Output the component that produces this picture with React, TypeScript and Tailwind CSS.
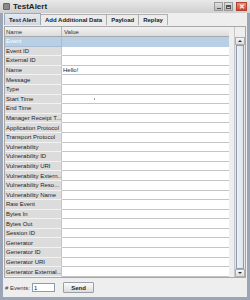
import React from 'react';

const rows = [
  'Event',
  'Event ID',
  'External ID',
  'Name',
  'Message',
  'Type',
  'Start Time',
  'End Time',
  'Manager Receipt T...',
  'Application Protocol',
  'Transport Protocol',
  'Vulnerability',
  'Vulnerability ID',
  'Vulnerability URI',
  'Vulnerability Extern...',
  'Vulnerability Reso...',
  'Vulnerability Name',
  'Raw Event',
  'Bytes In',
  'Bytes Out',
  'Session ID',
  'Generator',
  'Generator ID',
  'Generator URI',
  'Generator External...',
];

const values: Record<string, string> = { Name: 'Hello!' };

const tabs = ['Test Alert', 'Add Additional Data', 'Payload', 'Replay'];

export default function App() {
  return (
    <div
      className="w-[250px] h-[300px] flex flex-col bg-[#9aa6b8] overflow-hidden text-[#222]"
      style={{ fontFamily: '"Liberation Sans", Arial, sans-serif' }}
    >
      {/* Title bar */}
      <div className="h-[13px] flex items-center bg-gradient-to-b from-[#e9e9e9] to-[#cfcfcf] px-[3px]">
        <div className="w-[7px] h-[7px] bg-[#8a8a8a] border border-[#666] rounded-[1px] mr-[3px]" />
        <span className="text-[8px] font-bold leading-none">TestAlert</span>
        <div className="ml-auto flex items-center gap-[1px]">
          <div className="w-[9px] h-[9px] bg-gradient-to-b from-[#e0e0e0] to-[#b8b8b8] border border-[#9a9a9a] flex items-end justify-center pb-[1px]">
            <div className="w-[4px] h-[1px] bg-[#555]" />
          </div>
          <div className="w-[9px] h-[9px] bg-gradient-to-b from-[#e0e0e0] to-[#b8b8b8] border border-[#9a9a9a] flex items-center justify-center">
            <div className="w-[5px] h-[4px] border border-[#555] border-t-2" />
          </div>
          <div className="w-[11px] h-[9px] bg-gradient-to-b from-[#f08a7a] to-[#d2402c] border border-[#b04030] flex items-center justify-center ml-[2px]">
            <span className="text-[7px] font-bold text-white leading-none">✕</span>
          </div>
        </div>
      </div>

      {/* Body */}
      <div className="flex-1 mx-[3px] mb-[3px] bg-[#eeeeee] flex flex-col">
        {/* Tabs */}
        <div className="h-[12px] flex items-end px-[1px]">
          {tabs.map((t, i) => (
            <div
              key={t}
              className={
                i === 0
                  ? 'h-[12px] px-[4px] flex items-center border border-b-0 border-[#a0a8b4] bg-gradient-to-b from-[#e4eaf2] to-[#cfd8e4] text-[6px] font-bold leading-none rounded-t-[1px]'
                  : 'h-[11px] px-[4px] flex items-center border border-b-0 border-l-0 border-[#b0b0b0] bg-[#ececec] text-[6px] font-bold leading-none'
              }
            >
              {t}
            </div>
          ))}
        </div>

        {/* Scroll pane */}
        <div className="mt-[1px] mx-[1px] h-[252px] border border-[#a8a8a8] bg-[#eeeeee] flex">
          <div className="w-[224px] flex flex-col">
            {/* Header */}
            <div className="h-[10px] flex bg-gradient-to-b from-[#f2f2f2] to-[#dcdcdc] border-b border-[#a8a8a8] text-[6px] leading-none text-[#333]">
              <div className="w-[57px] border-r border-[#b8b8b8] flex items-center pl-[1px]">Name</div>
              <div className="flex-1 flex items-center pl-[2px]">Value</div>
            </div>
            {rows.map((r, i) => (
              <div key={r} className="h-[9.6px] flex text-[6px] leading-none">
                <div
                  className={
                    i === 0
                      ? 'w-[57px] bg-[#b8cfe5] text-white border-r border-b border-[#a8bcd4] flex items-center pl-[1px] whitespace-nowrap overflow-hidden'
                      : 'w-[57px] bg-[#dcdcdc] border-r border-r-[#c4c4c4] border-b border-b-[#f2f2f2] flex items-center pl-[1px] whitespace-nowrap overflow-hidden'
                  }
                >
                  {r}
                </div>
                <div
                  className={
                    i === 0
                      ? 'flex-1 bg-[#b8cfe5] border-b border-[#b8cfe5] flex items-center pl-[1px]'
                      : 'flex-1 bg-white border-b border-[#c4c4c4] flex items-center pl-[1px] relative'
                  }
                >
                  {values[r]}
                  {r === 'Start Time' && (
                    <span className="absolute left-[32px] top-[3px] w-[1px] h-[2px] bg-[#999]" />
                  )}
                </div>
              </div>
            ))}
          </div>
          <div className="flex-1" />
          {/* Vertical scrollbar */}
          <div className="w-[11px] flex flex-col pt-[10px] border-l border-[#c8c8c8]">
            <div className="h-[8px] bg-gradient-to-b from-[#f4f4f4] to-[#dddddd] border border-[#b0b0b0] flex items-center justify-center">
              <div className="w-0 h-0 border-l-[2px] border-r-[2px] border-b-[2px] border-l-transparent border-r-transparent border-b-[#333]" />
            </div>
            <div className="flex-1 bg-[#e4e4e4] px-[1px]">
              <div className="h-full border border-[#8e9cb2] bg-gradient-to-r from-[#eef1f6] to-[#dde3ec]" />
            </div>
            <div className="h-[8px] bg-gradient-to-b from-[#f4f4f4] to-[#dddddd] border border-[#b0b0b0] flex items-center justify-center">
              <div className="w-0 h-0 border-l-[2px] border-r-[2px] border-t-[2px] border-l-transparent border-r-transparent border-t-[#333]" />
            </div>
          </div>
        </div>

        {/* Bottom bar */}
        <div className="flex-1 flex items-center px-[2px] gap-[1px] text-[6px] leading-none">
          <span className="text-[#333]"># Events:</span>
          <div className="w-[23px] h-[9px] bg-white border border-[#8e9cb2] flex items-center pl-[1px] ml-[1px]">1</div>
          <div className="ml-[7px] w-[31px] h-[11px] border border-[#9aa0aa] rounded-[1px] bg-gradient-to-b from-[#fbfbfb] to-[#dcdcdc] flex items-center justify-center font-bold">
            Send
          </div>
        </div>
      </div>
    </div>
  );
}
